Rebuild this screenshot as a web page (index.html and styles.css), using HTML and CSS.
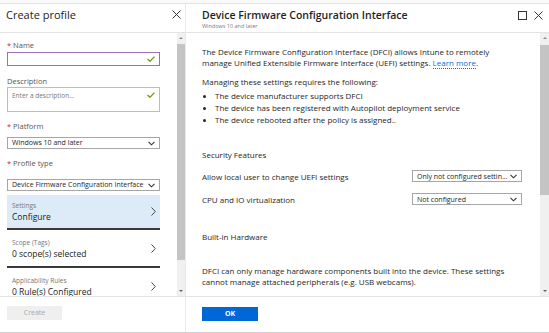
FILE: index.html
```html
<!DOCTYPE html>
<html lang="en">
<head>
<meta charset="utf-8">
<title>Create profile - DFCI</title>
<link rel="stylesheet" href="styles.css">
</head>
<body>
<div class="topstrip"></div>
<div class="panels">
  <section class="blade left">
    <header class="blade-head">
      <h1 class="title-left">Create profile</h1>
      <span class="icon-btn"><svg width="9" height="9" viewBox="0 0 9 9"><path d="M0.5 0.5L8.5 8.5M8.5 0.5L0.5 8.5" stroke="#333" stroke-width="1" fill="none"/></svg></span>
    </header>
    <div class="blade-body">
      <div class="content-left">
        <div class="label l-name"><span class="req">*</span> Name</div>
        <div class="input focused"><svg class="check" width="8" height="6" viewBox="0 0 8 6"><path d="M0.5 3L3 5.3L7.5 0.6" fill="none" stroke="#6e9e12" stroke-width="1.3"/></svg></div>
        <div class="label l-desc">Description</div>
        <div class="textarea"><span class="placeholder">Enter a description...</span><svg class="check" width="8" height="6" viewBox="0 0 8 6"><path d="M0.5 3L3 5.3L7.5 0.6" fill="none" stroke="#6e9e12" stroke-width="1.3"/></svg></div>
        <div class="label l-plat"><span class="req">*</span> Platform</div>
        <div class="select s-plat"><span>Windows 10 and later</span><svg width="7" height="5" viewBox="0 0 7 5"><path d="M0.5 0.8L3.5 3.8L6.5 0.8" fill="none" stroke="#333" stroke-width="1.1"/></svg></div>
        <div class="label l-type"><span class="req">*</span> Profile type</div>
        <div class="select s-type"><span>Device Firmware Configuration Interface</span><svg width="7" height="5" viewBox="0 0 7 5"><path d="M0.5 0.8L3.5 3.8L6.5 0.8" fill="none" stroke="#333" stroke-width="1.1"/></svg></div>
        <div class="nav-item active">
          <div class="nav-text"><div class="nav-label">Settings</div><div class="nav-value">Configure</div></div>
          <svg width="5" height="9" viewBox="0 0 5 9"><path d="M0.5 0.5L4.3 4.5L0.5 8.5" fill="none" stroke="#444" stroke-width="1"/></svg>
        </div>
        <div class="nav-item">
          <div class="nav-text"><div class="nav-label">Scope (Tags)</div><div class="nav-value">0 scope(s) selected</div></div>
          <svg width="5" height="9" viewBox="0 0 5 9"><path d="M0.5 0.5L4.3 4.5L0.5 8.5" fill="none" stroke="#444" stroke-width="1"/></svg>
        </div>
        <div class="nav-item last">
          <div class="nav-text"><div class="nav-label">Applicability Rules</div><div class="nav-value">0 Rule(s) Configured</div></div>
          <svg width="5" height="9" viewBox="0 0 5 9"><path d="M0.5 0.5L4.3 4.5L0.5 8.5" fill="none" stroke="#444" stroke-width="1"/></svg>
        </div>
      </div>
      <div class="scrollbar sb-left">
        <span class="arrow up"></span>
        <div class="thumb"></div>
        <span class="arrow down"></span>
      </div>
    </div>
    <footer class="blade-foot foot-left">
      <span class="btn disabled">Create</span>
    </footer>
  </section>

  <section class="blade right">
    <header class="blade-head head-right">
      <div class="titles">
        <h1 class="title-right">Device Firmware Configuration Interface</h1>
        <div class="subtitle">Windows 10 and later</div>
      </div>
      <div class="head-icons">
        <svg width="9" height="9" viewBox="0 0 9 9"><rect x="0.5" y="0.5" width="8" height="8" fill="none" stroke="#333" stroke-width="1"/></svg>
        <svg width="9" height="9" viewBox="0 0 9 9"><path d="M0.5 0.5L8.5 8.5M8.5 0.5L0.5 8.5" stroke="#333" stroke-width="1" fill="none"/></svg>
      </div>
    </header>
    <div class="blade-body">
      <div class="content-right">
        <p class="para p-intro">The Device Firmware Configuration Interface (DFCI) allows Intune to remotely<br>manage Unified Extensible Firmware Interface (UEFI) settings. <a class="link">Learn more</a>.</p>
        <p class="para p-manage">Managing these settings requires the following:</p>
        <ul class="bullets">
          <li>The device manufacturer supports DFCI</li>
          <li>The device has been registered with Autopilot deployment service</li>
          <li>The device rebooted after the policy is assigned..</li>
        </ul>
        <div class="section-title s-sec">Security Features</div>
        <div class="setting-row r1">
          <span>Allow local user to change UEFI settings</span>
          <div class="select-sm"><span>Only not configured settin...</span><svg width="7" height="5" viewBox="0 0 7 5"><path d="M0.5 0.8L3.5 3.8L6.5 0.8" fill="none" stroke="#333" stroke-width="1.1"/></svg></div>
        </div>
        <div class="setting-row r2">
          <span>CPU and IO virtualization</span>
          <div class="select-sm"><span>Not configured</span><svg width="7" height="5" viewBox="0 0 7 5"><path d="M0.5 0.8L3.5 3.8L6.5 0.8" fill="none" stroke="#333" stroke-width="1.1"/></svg></div>
        </div>
        <div class="section-title s-hw">Built-in Hardware</div>
        <p class="para p-dfci">DFCI can only manage hardware components built into the device. These settings<br>cannot manage attached peripherals (e.g. USB webcams).</p>
      </div>
      <div class="scrollbar sb-right">
        <span class="arrow up"></span>
        <div class="thumb"></div>
        <span class="arrow down"></span>
      </div>
    </div>
    <footer class="blade-foot foot-right">
      <span class="btn primary">OK</span>
    </footer>
  </section>
</div>
<div class="bottomline"></div>
</body>
</html>
```

FILE: styles.css
```css
* { box-sizing: border-box; margin: 0; padding: 0; }
html, body { width: 549px; height: 333px; overflow: hidden; }
body {
  background: #e9e9e9;
  font-family: "Open Sans", "Noto Sans", sans-serif;
  font-size: 8px;
  color: #262626;
}
.topstrip { height: 4px; background: #fafafa; border-bottom: 1px solid #e2e2e2; }
.panels { display: flex; height: 328px; gap: 1px; }
.bottomline { height: 1px; background: #cfcfcf; }

.blade { background: #fff; display: flex; flex-direction: column; }
.blade.left { width: 185px; }
.blade.right { flex: 1; }

.blade-head {
  height: 29px;
  flex: none;
  border-bottom: 1px solid #e3e3e3;
  display: flex;
  justify-content: space-between;
  align-items: center;
  padding: 0 4px 7px 6px;
}
.title-left { font-size: 11px; font-weight: 400; color: #222; line-height: 14px; }
.icon-btn { display: flex; }

.head-right { padding: 4px 6px 0 16px; align-items: flex-start; }
.titles { display: flex; flex-direction: column; }
.title-right { font-size: 10.5px; font-weight: 600; line-height: 14px; color: #1e1e1e; }
.subtitle { font-size: 5.5px; line-height: 8px; color: #7a7a7a; }
.head-icons { display: flex; gap: 7px; margin-top: 3px; }
.head-icons svg { display: block; }

.blade-body { height: 263px; flex: none; display: flex; overflow: hidden; }
.blade-foot { height: 36px; flex: none; border-top: 1px solid #e3e3e3; display: flex; align-items: flex-start; }

/* left content */
.content-left { width: 177px; padding: 7px 17px 0 7px; }
.label { font-size: 7.5px; line-height: 11px; color: #555; }
.req { color: #e0141e; }
.l-name { margin-bottom: 1px; }
.l-desc { margin-top: 10px; }
.l-plat { margin-top: 9px; margin-bottom: 5px; }
.l-type { margin-top: 9px; margin-bottom: 10px; }
.input {
  height: 14px;
  border: 1px solid #a6a6a6;
  display: flex; align-items: center; justify-content: flex-end;
  padding-right: 4px;
}
.input.focused { border-color: #9b70b4; }
.textarea {
  height: 25px;
  border: 1px solid #bdbdbd;
  display: flex; justify-content: space-between; align-items: flex-start;
  padding: 4px 4px 0 4px;
}
.placeholder { font-size: 6.5px; line-height: 8px; color: #777; }
.check { display: block; }
.select {
  height: 12px;
  border: 1px solid #a6a6a6;
  display: flex; align-items: center; justify-content: space-between;
  padding: 0 4px 0 4px;
  font-size: 7px; color: #262626; line-height: 10px;
  white-space: nowrap;
}
.s-type { margin-bottom: 4px; }

.nav-item {
  display: flex; align-items: flex-start; justify-content: space-between;
  height: 38px;
  padding: 7px 4px 0 5px;
  border-bottom: 2px solid #3a3a3a;
}
.nav-item.active { background: #ddebf9; height: 35px; padding-top: 5px; }
.nav-item.last { border-bottom: none; padding-top: 7px; }
.nav-item svg { display: block; margin-top: 7px; }
.nav-label { font-size: 6.5px; line-height: 11px; color: #777; }
.nav-value { font-size: 8.5px; line-height: 12px; color: #222; }

/* scrollbars */
.scrollbar {
  background: #f0f0f0;
  display: flex; flex-direction: column; align-items: center;
}
.sb-left { width: 8px; }
.sb-right { width: 9px; margin-left: auto; }
.arrow { height: 10px; width: 100%; display: flex; align-items: center; justify-content: center; }
.arrow::after { content: ""; width: 0; height: 0; border-left: 2px solid transparent; border-right: 2px solid transparent; }
.arrow.up::after { border-bottom: 2px solid #8a8a8a; }
.arrow.down { margin-top: auto; }
.arrow.down::after { border-top: 2px solid #606060; }
.thumb { width: 100%; background: #c4c4c4; margin-top: 1px; }
.sb-left .thumb { height: 216px; }
.sb-right .thumb { height: 150px; margin-top: 2px; }

/* right content */
.content-right { padding: 13px 0 0 16px; width: 353px; font-size: 8px; color: #262626; }
.para { line-height: 11px; white-space: nowrap; }
.link { color: #0a6ecf; border-bottom: 1px dotted #0a6ecf; }
.p-manage { margin-top: 8px; }
.bullets { list-style: none; margin-top: 3px; }
.bullets li { line-height: 12px; display: flex; align-items: center; padding-left: 1px; }
.bullets li::before { content: ""; width: 3px; height: 3px; border-radius: 50%; background: #262626; margin-right: 9px; }
.section-title { line-height: 11px; }
.s-sec { margin-top: 23px; }
.setting-row {
  display: flex; justify-content: space-between; align-items: center;
  height: 14px;
  width: 320px;
}
.r1 { margin-top: 9px; }
.r2 { margin-top: 9px; }
.select-sm {
  width: 110px; height: 12px;
  border: 1px solid #a6a6a6;
  display: flex; justify-content: space-between; align-items: center;
  padding: 0 4px;
  font-size: 7px; white-space: nowrap;
}
.s-hw { margin-top: 25px; }
.p-dfci { margin-top: 23px; }

/* footers & buttons */
.foot-left { padding: 9px 0 0 7px; }
.foot-right { padding: 10px 0 0 16px; }
.btn {
  display: flex; align-items: center; justify-content: center;
  height: 14px; font-size: 7px; line-height: 14px;
}
.btn.disabled { width: 55px; background: #efefef; color: #a8a8a8; }
.btn.primary { width: 56px; background: #0067d6; color: #fff; font-weight: 700; }
```
